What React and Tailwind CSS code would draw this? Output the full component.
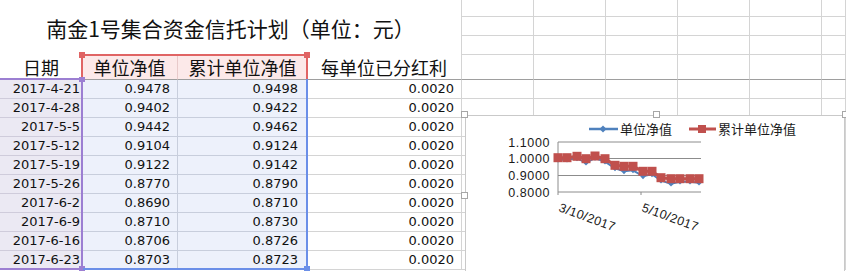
const rows = [
  ['2017-4-21', '0.9478', '0.9498'],
  ['2017-4-28', '0.9402', '0.9422'],
  ['2017-5-5', '0.9442', '0.9462'],
  ['2017-5-12', '0.9104', '0.9124'],
  ['2017-5-19', '0.9122', '0.9142'],
  ['2017-5-26', '0.8770', '0.8790'],
  ['2017-6-2', '0.8690', '0.8710'],
  ['2017-6-9', '0.8710', '0.8730'],
  ['2017-6-16', '0.8706', '0.8726'],
  ['2017-6-23', '0.8703', '0.8723'],
];

const font = { fontFamily: '"DejaVu Sans", "Noto Sans CJK SC", sans-serif' };
const cjk = { fontFamily: '"Noto Sans CJK SC", sans-serif' };

// chart points in page coords, shifted into the chart box below
const redPts = [
  [557, 156.7], [566, 156.7], [576, 155.3], [585, 157.7], [594, 155], [604, 157.7], [614, 164.3], [623, 165.3],
  [632, 165.3], [642, 170.3], [651, 170.3], [660, 176.7], [670, 177.7], [679, 177.7], [689, 177.7], [698, 177.7],
];
const blueDy = [2, 2, 2, 4, 2, 3, 3, 5, 4, 5, 3, 3, 5, 3, 3, 4];
const CX = 465, CY = 115;

function Chart() {
  const p = (pts) => pts.map(([x, y]) => `${x - CX},${y - CY}`).join(' ');
  const blue = redPts.map(([x, y], i) => [x, y + blueDy[i]]);
  return (
    <div className="absolute left-[465px] top-[115px] w-[380px] h-[160px] bg-white border border-[#c9c9c9]">
      <svg width="380" height="160" className="absolute left-0 top-0">
        <g fontFamily='"Liberation Sans", sans-serif' fontSize="12.5" fill="#1a1a1a">
          {[['1.1000', 141], ['1.0000', 157.5], ['0.9000', 174.5], ['0.8000', 191]].map(([t, y]) => (
            <g key={t}>
              <line x1={557 - CX} x2={700 - CX} y1={y - CY} y2={y - CY} stroke="#8c8c8c" strokeWidth="1" />
              <text x={549 - CX} y={y - CY + 4.5} textAnchor="end" letterSpacing="0.6">{t}</text>
            </g>
          ))}
          <line x1={557 - CX} x2={557 - CX} y1={141 - CY} y2={194 - CY} stroke="#8c8c8c" />
          <line x1={640 - CX} x2={640 - CX} y1={191 - CY} y2={194 - CY} stroke="#8c8c8c" />
          <text transform={`translate(${557 - CX},${210 - CY}) rotate(20)`} letterSpacing="0.4">3/10/2017</text>
          <text transform={`translate(${640 - CX},${210 - CY}) rotate(20)`} letterSpacing="0.4">5/10/2017</text>
        </g>
        <polyline points={p(blue)} fill="none" stroke="#4f81bd" strokeWidth="2" />
        {blue.map(([x, y], i) => (
          <rect key={i} x={x - CX - 2} y={y - CY - 2} width="4" height="4" fill="#4f81bd" transform={`rotate(45 ${x - CX} ${y - CY})`} />
        ))}
        <polyline points={p(redPts)} fill="none" stroke="#c0504d" strokeWidth="3" />
        {redPts.map(([x, y], i) => (
          <rect key={i} x={x - CX - 4.5} y={y - CY - 4.5} width="9" height="9" fill="#c0504d" />
        ))}
        <line x1={588 - CX} x2={617 - CX} y1={128 - CY} y2={128 - CY} stroke="#4f81bd" strokeWidth="2.5" />
        <rect x={602 - CX - 2.5} y={128 - CY - 2.5} width="5" height="5" fill="#4f81bd" transform={`rotate(45 ${602 - CX} ${128 - CY})`} />
        <line x1={688 - CX} x2={715 - CX} y1={128 - CY} y2={128 - CY} stroke="#c0504d" strokeWidth="3" />
        <rect x={701 - CX - 4} y={128 - CY - 4} width="8" height="8" fill="#c0504d" />
        <g style={cjk} fontSize="13" fill="#1a1a1a">
          <text x={619 - CX} y={133 - CY}>单位净值</text>
          <text x={717 - CX} y={133 - CY}>累计单位净值</text>
        </g>
      </svg>
      <span className="absolute -left-[5px] -top-[5px] w-[7px] h-[7px] bg-white border border-[#a6a6a6]" />
      <span className="absolute left-[187px] -top-[5px] w-[7px] h-[7px] bg-white border border-[#a6a6a6]" />
      <span className="absolute -right-[5px] -top-[5px] w-[7px] h-[7px] bg-white border border-[#a6a6a6]" />
      <span className="absolute -left-[5px] top-[76px] w-[7px] h-[7px] bg-white border border-[#a6a6a6]" />
    </div>
  );
}

function Blank({ cls = '' }) {
  return <div className={`border-r border-b border-[#d4d4d4] ${cls}`} />;
}

export default function App() {
  return (
    <div className="relative w-[846px] h-[271px] overflow-hidden bg-white text-[#111]" style={font}>
      <div className="grid grid-cols-[82px_96px_129px_155px_72px_72px_72px_72px_72px_24px] grid-rows-[17px_19px_19px_25px_repeat(10,19px)]">
        <div className="col-span-4 row-span-3 border-r border-[#d4d4d4] flex items-center justify-center pt-[2px] text-[21px]" style={cjk}>
          南金1号集合资金信托计划（单位：元）
        </div>
        {[0, 1, 2].map((r) => [0, 1, 2, 3, 4, 5].map((c) => <Blank key={`t${r}${c}`} />))}

        <div className="border-b border-[#9e9e9e] flex items-center justify-center text-[18px]" style={cjk}>日期</div>
        <div className="bg-[#fce9e9] border-r border-b border-r-[#e8caca] border-b-[#9e9e9e] flex items-center justify-center text-[18px]" style={cjk}>单位净值</div>
        <div className="bg-[#fce9e9] border-b border-[#9e9e9e] flex items-center justify-center text-[18px]" style={cjk}>累计单位净值</div>
        <div className="border-r border-b border-r-[#d4d4d4] border-b-[#9e9e9e] flex items-center justify-center text-[18px]" style={cjk}>每单位已分红利</div>
        {[0, 1, 2, 3, 4, 5].map((c) => <Blank key={`h${c}`} cls="border-b-[#9e9e9e]" />)}

        {rows.map(([d, n, a], i) => [
          <div key={`d${i}`} className="bg-[#ebe9f3] border-b border-[#cfccdb] flex items-center justify-end pr-[2px] text-[13px]">{d}</div>,
          <div key={`n${i}`} className="bg-[#edf1fb] border-r border-b border-[#c8cedc] flex items-center justify-end pr-[7px] text-[13px]">{n}</div>,
          <div key={`a${i}`} className="bg-[#edf1fb] border-b border-[#c8cedc] flex items-center justify-end pr-[9px] text-[13px]">{a}</div>,
          <div key={`v${i}`} className="border-r border-b border-[#d4d4d4] flex items-center justify-end pr-[7px] text-[13px]">0.0020</div>,
          ...[0, 1, 2, 3, 4, 5].map((c) => <Blank key={`r${i}${c}`} />),
        ])}
      </div>

      {/* reference highlights drawn over the sheet */}
      <div className="absolute left-[81px] top-[54px] w-[227px] h-[26px] border-2 border-b-0 border-[#e06464]">
        <span className="absolute -left-[4px] -top-[4px] w-[6px] h-[6px] bg-[#e06464]" />
        <span className="absolute -right-[4px] -top-[4px] w-[6px] h-[6px] bg-[#e06464]" />
      </div>
      <div className="absolute left-0 top-[78px] w-[83px] h-[192px] border-t-2 border-r-2 border-b-2 border-[#9c7fd2]">
        <span className="absolute -right-[4px] -top-[3px] w-[6px] h-[5px] bg-[#9c7fd2]" />
        <span className="absolute -right-[4px] -bottom-[4px] w-[6px] h-[6px] bg-[#9c7fd2]" />
      </div>
      <div className="absolute left-[83px] top-[79px] w-[225px] h-[191px] border-r-2 border-b-2 border-[#6b8fe8]">
        <span className="absolute -right-[4px] -bottom-[4px] w-[6px] h-[6px] bg-[#6b8fe8]" />
      </div>

      <Chart />
    </div>
  );
}
